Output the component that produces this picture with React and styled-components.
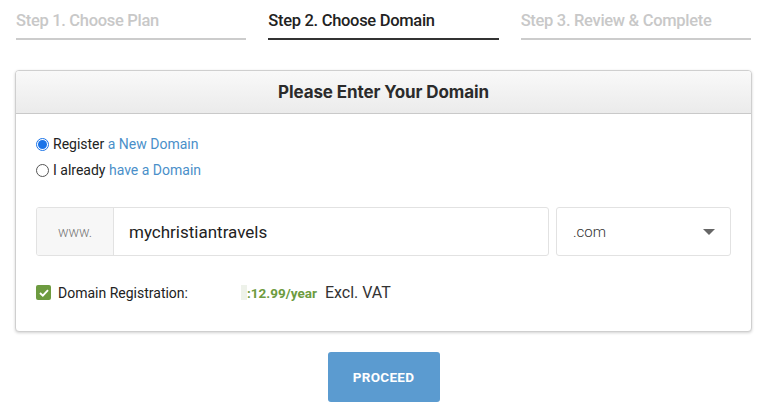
import React from "react";
import styled, { createGlobalStyle } from "styled-components";

const Global = createGlobalStyle`
  html, body { margin: 0; padding: 0; background: #fff; }
  body { font-family: Roboto, "Liberation Sans", sans-serif; color: #333; }
  * { box-sizing: border-box; }
`;

const Page = styled.div`
  width: 767px;
  height: 411px;
  padding: 0 16px;
  display: flex;
  flex-direction: column;
  overflow: hidden;
`;

const Steps = styled.div`
  display: grid;
  grid-template-columns: repeat(3, 1fr);
  column-gap: 22px;
  padding-top: 11px;
`;

const Step = styled.div`
  font-family: Roboto, "Liberation Sans", sans-serif;
  font-weight: 500;
  font-size: 16.5px;
  letter-spacing: -0.3px;
  line-height: 20px;
  padding-bottom: 7px;
  color: ${(p) => (p.$active ? "#222" : "#c8c8c8")};
  border-bottom: 2px solid ${(p) => (p.$active ? "#333" : "#cccccc")};
`;

const Card = styled.div`
  margin: 30px -1px 0 -1px;
  border: 1px solid #cfcfcf;
  border-radius: 4px;
  box-shadow: 0 1px 3px rgba(0, 0, 0, 0.18);
  background: #fff;
  overflow: hidden;
`;

const CardHeader = styled.div`
  height: 43px;
  display: flex;
  align-items: center;
  justify-content: center;
  background: linear-gradient(#f9f9f9, #ebebeb);
  border-bottom: 1px solid #c9c9c9;
  font-family: Inter, "Open Sans", sans-serif;
  font-weight: 700;
  font-size: 17px;
  letter-spacing: -0.1px;
  color: #2b2b2b;
`;

const CardBody = styled.div`
  padding: 17px 20px 29px 20px;
`;

const RadioRow = styled.label`
  display: flex;
  align-items: center;
  gap: 4px;
  font-size: 14px;
  line-height: 26px;
  color: #222;
`;

const RadioDot = styled.span`
  width: 13px;
  height: 13px;
  border-radius: 50%;
  flex: none;
  border: ${(p) => (p.$checked ? "1px solid #1a73e8" : "1px solid #555")};
  background: #fff;
  display: flex;
  align-items: center;
  justify-content: center;
  &::after {
    content: "";
    width: 9px;
    height: 9px;
    border-radius: 50%;
    background: ${(p) => (p.$checked ? "#1a73e8" : "transparent")};
  }
`;

const Link = styled.span`
  color: #4a8fc9;
`;

const InputRow = styled.div`
  display: flex;
  gap: 7px;
  margin-top: 24px;
  height: 49px;
`;

const InputGroup = styled.div`
  flex: 1;
  display: flex;
  border: 1px solid #e2e2e2;
  border-radius: 3px;
  overflow: hidden;
`;

const Addon = styled.div`
  width: 77px;
  background: #f7f7f7;
  border-right: 1px solid #e2e2e2;
  display: flex;
  align-items: center;
  justify-content: center;
  font-size: 14px;
  color: #777;
  font-weight: 300;
`;

const Field = styled.div`
  flex: 1;
  display: flex;
  align-items: center;
  padding-left: 15px;
  font-size: 17px;
  color: #222;
`;

const Select = styled.div`
  width: 175px;
  border: 1px solid #e2e2e2;
  border-radius: 3px;
  display: flex;
  align-items: center;
  justify-content: space-between;
  padding: 0 15px 0 16px;
  font-size: 15px;
  font-weight: 300;
  color: #333;
`;

const Caret = styled.span`
  width: 0;
  height: 0;
  border-left: 6px solid transparent;
  border-right: 6px solid transparent;
  border-top: 6px solid #666;
`;

const PriceRow = styled.div`
  display: flex;
  align-items: center;
  margin-top: 27px;
  font-size: 14px;
  color: #222;
`;

const Check = styled.span`
  width: 15px;
  height: 15px;
  border-radius: 2px;
  background: #6d9b40;
  display: flex;
  align-items: center;
  justify-content: center;
  margin-right: 7px;
`;

const Label = styled.span`
  width: 183px;
`;

const Mask = styled.span`
  display: inline-block;
  width: 6px;
  height: 15px;
  background: #eef2ea;
`;

const Price = styled.span`
  color: #6d9b40;
  font-weight: 700;
  font-size: 13.5px;
`;

const Vat = styled.span`
  margin-left: 8px;
  font-size: 16px;
  color: #333;
`;

const Footer = styled.div`
  display: flex;
  justify-content: center;
  margin-top: 20px;
`;

const Button = styled.button`
  width: 112px;
  height: 50px;
  border: none;
  border-radius: 3px;
  background: #5b9bd0;
  color: #fff;
  font-family: Roboto, "Liberation Sans", sans-serif;
  font-weight: 700;
  font-size: 13.5px;
  letter-spacing: 0.3px;
`;

export default function App() {
  return (
    <>
      <Global />
      <Page>
        <Steps>
          <Step>Step 1. Choose Plan</Step>
          <Step $active>Step 2. Choose Domain</Step>
          <Step>Step 3. Review &amp; Complete</Step>
        </Steps>
        <Card>
          <CardHeader>Please Enter Your Domain</CardHeader>
          <CardBody>
            <RadioRow>
              <RadioDot $checked />
              <span>
                Register <Link>a New Domain</Link>
              </span>
            </RadioRow>
            <RadioRow>
              <RadioDot />
              <span>
                I already <Link>have a Domain</Link>
              </span>
            </RadioRow>
            <InputRow>
              <InputGroup>
                <Addon>www.</Addon>
                <Field>mychristiantravels</Field>
              </InputGroup>
              <Select>
                <span>.com</span>
                <Caret />
              </Select>
            </InputRow>
            <PriceRow>
              <Check>
                <svg width="10" height="8" viewBox="0 0 10 8">
                  <path d="M1 4 L3.8 6.6 L9 1.2" fill="none" stroke="#fff" strokeWidth="1.9" />
                </svg>
              </Check>
              <Label>Domain Registration:</Label>
              <Mask />
              <Price>:12.99/year</Price>
              <Vat>Excl. VAT</Vat>
            </PriceRow>
          </CardBody>
        </Card>
        <Footer>
          <Button>PROCEED</Button>
        </Footer>
      </Page>
    </>
  );
}
